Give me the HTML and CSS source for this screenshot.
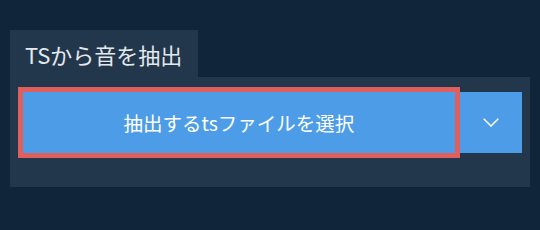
FILE: index.html
```html
<!DOCTYPE html>
<html>
<head>
    <meta name="viewport" content="width=device-width, initial-scale=1">
    <title>TSから音を抽出</title>
    <link rel="stylesheet" href="styles.css">
</head>
<body>
    <div class="extract">
        <div class="extract-tab">TSから音を抽出</div>
        <div class="extract-panel">
            <div class="split-btn">
                <button class="split-main" type="button">抽出するtsファイルを選択</button>
                <button class="split-toggle" type="button" aria-label="その他">
                    <svg width="16" height="9" viewBox="0 0 16 9">
                        <path d="M0.7 0.7 L8 8 L15.3 0.7" fill="none" stroke="#fff" stroke-width="1.5"/>
                    </svg>
                </button>
            </div>
        </div>
    </div>
</body>
</html>
```

FILE: styles.css
```css
body {
    background: #10243a;
    color: #e4e9ee;
    font-family: "Noto Sans CJK JP", "Noto Sans", sans-serif;
    margin: 0;
    min-height: 100vh;
}

.extract {
    padding: 30px 10px 0 10px;
    width: 520px;
}

.extract-tab {
    display: inline-flex;
    align-items: center;
    height: 47px;
    padding: 0 0 0 15px;
    width: 173px;
    background: #23374c;
    font-size: 22px;
}

.extract-panel {
    background: #23374c;
    padding: 15px 8px 34px 13px;
}

.split-btn {
    display: flex;
    height: 61px;
}

.split-main {
    flex: 1;
    background: #4d9ce7;
    color: #fff;
    border: none;
    font-family: inherit;
    font-size: 19.5px;
    outline: 5px solid #df5f5c;
    position: relative;
    z-index: 1;
    padding: 0;
    cursor: pointer;
}

.split-toggle {
    width: 67px;
    background: #4d9ce7;
    border: none;
    display: flex;
    align-items: center;
    justify-content: center;
    padding: 0 0 0 5px;
    cursor: pointer;
}
```
